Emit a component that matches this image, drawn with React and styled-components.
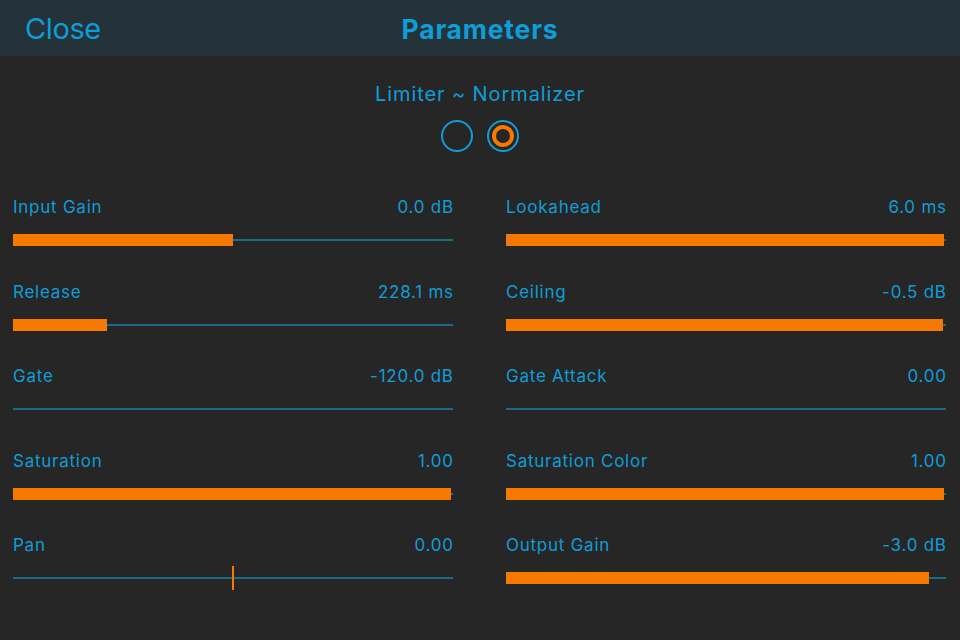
import React from "react";
import styled, { createGlobalStyle } from "styled-components";

const Global = createGlobalStyle`
  html, body { margin: 0; padding: 0; background: #262626; }
  body { font-family: Inter, "Noto Sans", sans-serif; -webkit-font-smoothing: antialiased; }
`;

const BLUE = "#0f9dd7";
const ORANGE = "#f77900";
const LINE = "#1a6a8a";

const Page = styled.div`
  width: 960px;
  height: 640px;
  background: #262626;
  overflow: hidden;
`;

const Header = styled.header`
  height: 56px;
  background: #24323a;
  display: grid;
  grid-template-columns: 1fr auto 1fr;
  align-items: center;
  padding: 0 25px;
  box-sizing: border-box;
`;

const CloseButton = styled.button`
  justify-self: start;
  background: none;
  border: none;
  padding: 0;
  margin-top: 1px;
  color: ${BLUE};
  font-family: inherit;
  font-size: 29px;
  font-weight: 400;
  letter-spacing: -0.4px;
  line-height: 1;
  cursor: pointer;
`;

const Title = styled.h1`
  margin: 3px 0 0;
  color: ${BLUE};
  font-size: 26.5px;
  font-weight: 700;
  letter-spacing: 0.8px;
  line-height: 1;
`;

const ModeSection = styled.section`
  display: flex;
  flex-direction: column;
  align-items: center;
  padding-top: 26px;
`;

const ModeTitle = styled.div`
  color: ${BLUE};
  font-size: 20px;
  line-height: 24px;
  letter-spacing: 0.9px;
`;

const RadioRow = styled.div`
  display: flex;
  gap: 14px;
  margin-top: 14px;
`;

const Radio = styled.button`
  width: 32px;
  height: 32px;
  border-radius: 50%;
  border: 2px solid ${BLUE};
  background: transparent;
  box-sizing: border-box;
  padding: 0;
  display: flex;
  align-items: center;
  justify-content: center;
  &::after {
    content: "";
    display: ${(p) => (p.$on ? "block" : "none")};
    width: 22px;
    height: 22px;
    border-radius: 50%;
    border: 4px solid ${ORANGE};
    box-sizing: border-box;
  }
`;

const Grid = styled.div`
  display: grid;
  grid-template-columns: 440px 440px;
  column-gap: 53px;
  grid-auto-rows: 84.5px;
  padding: 45px 14px 0 13px;
`;

const Param = styled.div`
  display: flex;
  flex-direction: column;
`;

const ParamHead = styled.div`
  display: flex;
  justify-content: space-between;
  color: ${BLUE};
  font-size: 17px;
  line-height: 20px;
  letter-spacing: 0.75px;
`;

const Value = styled.span`
  margin-right: -0.75px;
`;

const Track = styled.div`
  position: relative;
  height: 12px;
  margin-top: 17px;
  &::before {
    content: "";
    position: absolute;
    left: 0;
    right: 0;
    top: 5px;
    height: 2px;
    background: ${LINE};
  }
`;

const Fill = styled.div`
  position: relative;
  height: 12px;
  background: ${ORANGE};
`;

const Tick = styled.div`
  position: absolute;
  top: -6px;
  width: 2px;
  height: 24px;
  margin-left: -1px;
  background: ${ORANGE};
`;

const params = [
  { label: "Input Gain", value: "0.0 dB", fill: 220 },
  { label: "Lookahead", value: "6.0 ms", fill: 438 },
  { label: "Release", value: "228.1 ms", fill: 94 },
  { label: "Ceiling", value: "-0.5 dB", fill: 437 },
  { label: "Gate", value: "-120.0 dB", fill: 0 },
  { label: "Gate Attack", value: "0.00", fill: 0 },
  { label: "Saturation", value: "1.00", fill: 438 },
  { label: "Saturation Color", value: "1.00", fill: 438 },
  { label: "Pan", value: "0.00", tick: 220 },
  { label: "Output Gain", value: "-3.0 dB", fill: 423 },
];

export default function App() {
  return (
    <Page>
      <Global />
      <Header>
        <CloseButton>Close</CloseButton>
        <Title>Parameters</Title>
        <span />
      </Header>
      <ModeSection>
        <ModeTitle>Limiter ~ Normalizer</ModeTitle>
        <RadioRow>
          <Radio aria-label="Limiter" />
          <Radio $on aria-label="Normalizer" />
        </RadioRow>
      </ModeSection>
      <Grid>
        {params.map((p) => (
          <Param key={p.label}>
            <ParamHead>
              <span>{p.label}</span>
              <Value>{p.value}</Value>
            </ParamHead>
            <Track>
              {p.fill > 0 && <Fill style={{ width: p.fill }} />}
              {p.tick !== undefined && <Tick style={{ left: p.tick }} />}
            </Track>
          </Param>
        ))}
      </Grid>
    </Page>
  );
}
